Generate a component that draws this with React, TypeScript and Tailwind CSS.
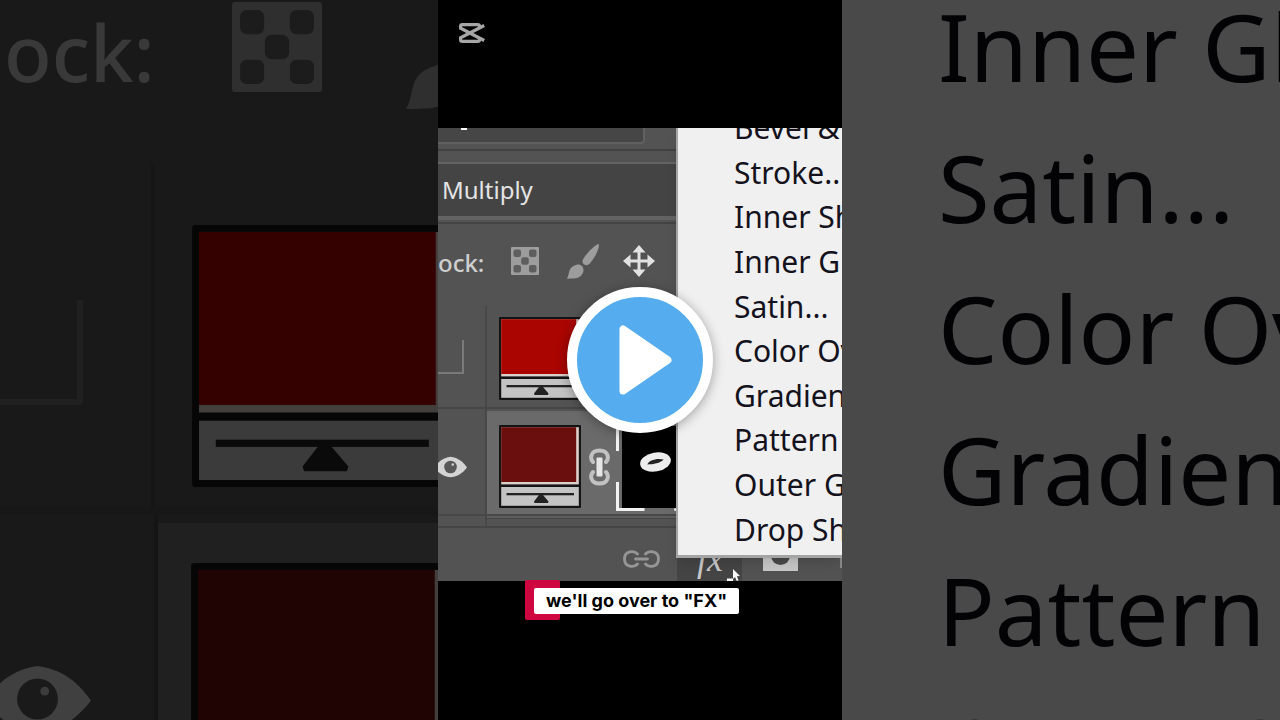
import React from 'react';

interface IconProps {
  className?: string;
}

interface SwatchProps extends IconProps {
  color: string;
}

const EFFECTS = [
  'Bevel & Emboss...',
  'Stroke...',
  'Inner Shadow...',
  'Inner Glow...',
  'Satin...',
  'Color Overlay...',
  'Gradient Overlay...',
  'Pattern Overlay...',
  'Outer Glow...',
  'Drop Shadow...',
];

const CheckerIcon: React.FC<IconProps> = ({ className }) => (
  <svg className={className} viewBox="0 0 28 28" fill="none">
    <rect width="28" height="28" rx="1" fill="#9d9d9d" />
    <g fill="#5e5e5e">
      <rect x="2.5" y="2.5" width="7.5" height="7.5" rx="2" />
      <rect x="18" y="2.5" width="7.5" height="7.5" rx="2" />
      <rect x="10.2" y="10.2" width="7.6" height="7.6" rx="2.2" />
      <rect x="2.5" y="18" width="7.5" height="7.5" rx="2" />
      <rect x="18" y="18" width="7.5" height="7.5" rx="2" />
    </g>
  </svg>
);

const BrushIcon: React.FC<IconProps> = ({ className }) => (
  <svg className={className} viewBox="0 0 32 35" fill="#9d9d9d">
    <path d="M31 0c1 0 1 1 .8 3-1.500 6-5 12-9 16.500-2 2-4 2-5.500 1-1.800-1.200-2.300-3-1.300-5C19 10 26 2.500 31 0Z" />
    <path d="M9 21c4-1.500 7.500 1 7.500 5 0 5-5 8.500-10 8.500-3 0-5 .5-6.500 0 1.500-2.500 1.500-5 2.500-8 1-3 3.500-4.500 6.500-5.500Z" />
  </svg>
);

const MoveIcon: React.FC<IconProps> = ({ className }) => (
  <svg className={className} viewBox="0 0 32 32" fill="#e2e2e2">
    <path d="M16 0l6.500 7.500H17.500v7H24.500V9.500L32 16l-7.500 6.500V17.500h-7v7h5L16 32l-6.500-7.500h5v-7h-7v5L0 16l7.500-6.500v5h7v-7h-5Z" />
  </svg>
);

const EyeIcon: React.FC<IconProps> = ({ className }) => (
  <svg className={className} viewBox="0 0 34 22">
    <path d="M0 11.500C5 5 10 1.500 17 .5c7 1 12 4 17 11C29 18 23 21.500 17 21.500S5 18 0 11.500Z" fill="#d4d4d4" />
    <circle cx="17" cy="11" r="6.500" fill="#585858" />
    <circle cx="19.300" cy="8.500" r="1.400" fill="#c8c8c8" />
  </svg>
);

const Swatch: React.FC<SwatchProps> = ({ color, className }) => (
  <svg className={className} viewBox="0 0 82 83">
    <rect width="82" height="83" rx="1" fill="#141414" />
    <rect x="2.200" y="2.200" width="77.600" height="57.200" fill="#dccfca" />
    <rect x="2.200" y="2.200" width="75" height="54.800" fill={color} />
    <rect x="2.200" y="62" width="77.600" height="18.800" fill="#c4c4c4" />
    <rect x="7.500" y="68" width="67.500" height="2.300" fill="#222" />
    <path d="M40 70h4l5.500 6.500-.5 1.500H35.500l-.5-1.500Z" fill="#222" />
  </svg>
);

const ChainIcon: React.FC<IconProps> = ({ className }) => (
  <svg className={className} viewBox="0 0 21 38" fill="none">
    <g stroke="#c2c2c2" strokeWidth="4" strokeLinecap="round">
      <path d="M4 14C1 11 1 2.500 10.500 2.500S20 11 17 14" />
      <path d="M4 24c-3 3-3 11.500 6.500 11.500S20 27 17 24" />
    </g>
    <rect x="7.500" y="9.500" width="6" height="19" rx="1" fill="#e6e6e6" />
  </svg>
);

const LinkIcon: React.FC<IconProps> = ({ className }) => (
  <svg className={className} viewBox="0 0 37 18" fill="none" stroke="#969696" strokeWidth="2.800" strokeLinecap="round">
    <path d="M14.500 4C11.500.5 1.500.3 1.500 9s10 8.500 13 5" />
    <path d="M22.500 4c3-3.500 13-3.700 13 5s-10 8.500-13 5" />
    <path d="M12.500 9h12" />
  </svg>
);

const MaskThumb: React.FC<IconProps> = ({ className }) => (
  <svg className={className} viewBox="0 0 61 90">
    <rect x="6" y="4" width="55" height="82" fill="#000" />
    <path d="M1.500 3v26M1.500 60v27.500h27" stroke="#f2f2f2" strokeWidth="3" fill="none" />
    <circle cx="59.500" cy="87.500" r="1.500" fill="#f2f2f2" />
    <g transform="rotate(-10 39.500 40)">
      <ellipse cx="39.500" cy="40" rx="15.500" ry="9.500" fill="#ededed" />
      <path d="M31 41c2-4 11-5 17-2-4 3-11 3-17 2Z" fill="#222" />
    </g>
  </svg>
);

const CapLogo: React.FC<IconProps> = ({ className }) => (
  <svg className={className} viewBox="0 0 26 20" fill="none" stroke="#a6a6a6" strokeWidth="3.200">
    <path d="M20.500 5V3q0-1.400-2-1.400H3.500Q1.600 1.600 1.600 3v2.200L25.200 17.500" />
    <path d="M20.500 15v2q0 1.400-2 1.400H3.500q-1.900 0-1.900-1.400v-2.200L25.200 2.500" />
  </svg>
);

const CursorIcon: React.FC<IconProps> = ({ className }) => (
  <svg className={className} viewBox="0 0 13 12">
    <path d="M0 9.500h6V12H0Z" fill="#fff" />
    <path d="M6 0l7 7-3.200.3 1.700 4-1.700.7-1.800-4L6 10Z" fill="#fff" />
  </svg>
);

// Blown-up left part of the frame, behind the video
const LeftBackdrop = () => (
  <div className="flex-1 min-w-0 overflow-hidden" aria-hidden="true">
    <div className="h-full flex flex-col bg-[#535353] opacity-30">
      <div className="h-[165px] shrink-0 flex items-start overflow-hidden">
        <span className="w-[232px] shrink-0 pl-1 text-[78px] leading-[104px] font-medium text-[#bdbdbd]">ock:</span>
        <CheckerIcon className="w-[90px] h-[90px] mt-0.5 shrink-0" />
        <BrushIcon className="w-[101px] h-[110px] ml-[84px] shrink-0" />
      </div>
      <div className="h-[350px] shrink-0 flex border-b-8 border-[#4c4c4c]">
        <div className="w-[155px] shrink-0 pt-[135px] border-r-4 border-[#484848]">
          <div className="w-[83px] h-[105px] border-r-[6px] border-b-[6px] border-[#6a6a6a] rounded-br" />
        </div>
        <Swatch color="#ab0500" className="w-[259px] h-[262px] ml-[37px] mt-[60px] shrink-0" />
      </div>
      <div className="flex-1 min-h-0 flex overflow-hidden">
        <div className="w-[158px] shrink-0 border-r-4 border-[#484848]">
          <EyeIcon className="w-[107px] h-[70px] -ml-4 mt-[149px]" />
        </div>
        <div className="flex-1 mt-2 bg-[#6a6a6a]">
          <Swatch color="#6a0f0d" className="w-[259px] h-[262px] ml-[33px] mt-10 max-w-none" />
        </div>
      </div>
    </div>
  </div>
);

const RightBackdrop = () => (
  <div className="flex-1 min-w-0 overflow-hidden" aria-hidden="true">
    <ul className="h-full overflow-hidden bg-[#f0f0f0] opacity-30 pl-24 text-[94px] text-[#0a0810] whitespace-nowrap">
      {EFFECTS.slice(3, 9).map((name) => (
        <li key={name} className="leading-[141px] first:-mt-6">
          {name}
        </li>
      ))}
    </ul>
  </div>
);

const EffectsMenu = () => (
  <div className="absolute right-0 top-0 w-[166px] h-[430px] flex flex-col justify-end overflow-hidden bg-[#f0f0f0] border-l-2 border-b-[3px] border-[#a4a4a4] shadow-lg">
    <ul className="h-[446px] shrink-0 mb-[3px] grid grid-rows-10">
      {EFFECTS.map((name) => (
        <li key={name} className="flex items-center pl-14">
          <button className="text-[30px] leading-10 whitespace-nowrap text-[#14121c]">{name}</button>
        </li>
      ))}
    </ul>
  </div>
);

const LayersPanel = () => (
  <div className="relative h-[453px] shrink-0 flex flex-col overflow-hidden bg-[#535353]">
    <div className="h-[23px] border-b-2 border-[#414141]">
      <div className="w-[207px] h-4 pl-[23px] bg-[#464646] border-r-2 border-b-2 border-[#606060] rounded-br">
        <div className="w-1.5 h-0.5 bg-white" />
      </div>
    </div>
    <select
      aria-label="Blend mode"
      className="appearance-none mt-[11px] h-[58px] pl-1 bg-[#444444] border-t-2 border-b-4 border-[#636363] text-2xl text-[#e4e4e4]"
    >
      <option>Multiply</option>
    </select>
    <div className="h-1 border-b-2 border-[#444444]" />
    <div className="h-[74px] shrink-0 flex items-center">
      <span className="w-[73px] pt-1 text-2xl font-medium text-[#cfcfcf]">ock:</span>
      <button aria-label="Lock transparent pixels"><CheckerIcon className="w-7 h-7" /></button>
      <button aria-label="Lock image pixels" className="ml-7"><BrushIcon className="w-8 h-[35px]" /></button>
      <button aria-label="Lock position" className="ml-6"><MoveIcon className="w-8 h-8" /></button>
    </div>
    <div className="h-[111px] shrink-0 flex border-b-2 border-[#464646]">
      <div className="w-[49px] mt-2 pt-[34px] border-r-2 border-[#484848]">
        <div className="w-[26px] h-[34px] border-r-2 border-b-2 border-[#7a7a7a]" />
      </div>
      <Swatch color="#ab0500" className="w-[82px] h-[83px] ml-3 mt-[19px]" />
    </div>
    <div className="h-[105px] shrink-0 flex">
      <div className="w-[49px] flex items-center border-r-2 border-[#484848]">
        <button aria-label="Toggle visibility" className="-ml-1 mt-2.5"><EyeIcon className="w-[33px] h-[22px] max-w-none" /></button>
      </div>
      <div className="flex-1 flex items-center gap-2 pl-3 pt-2 mt-0.5 bg-[#6a6a6a]">
        <Swatch color="#6a0f0d" className="w-[82px] h-[83px]" />
        <ChainIcon className="w-[21px] h-[38px]" />
        <MaskThumb className="w-[61px] h-[90px] -ml-0.5" />
      </div>
    </div>
    <div className="h-3 shrink-0 flex">
      <div className="w-[49px] border-r-2 border-t-2 border-[#484848]" />
      <div className="flex-1 border-t-2 border-[#484848]">
        <div className="h-[3px] border-b border-[#464646] bg-[#5f5f5f]" />
      </div>
    </div>
    <div className="flex-1 flex border-t-2 border-[#454545]">
      <button aria-label="Link layers" className="w-[239px] pl-[185px] pt-2 h-full flex items-center">
        <LinkIcon className="w-[37px] h-[18px]" />
      </button>
      <button className="relative w-[65px] h-full pl-5 pt-2 bg-[#454545] text-left">
        <span className="font-['Liberation_Serif',serif] italic text-4xl leading-10 text-[#c9c9c9]">fx</span>
        <CursorIcon className="absolute right-0.5 bottom-0 w-[13px] h-3" />
      </button>
      <button aria-label="Add mask" className="ml-[21px] mt-3 self-start">
        <svg className="w-[35px] h-[31px]" viewBox="0 0 35 31">
          <rect width="35" height="31" fill="#c9c9c9" />
          <circle cx="17.500" cy="15.500" r="9.500" fill="#4a4a4a" />
        </svg>
      </button>
      <div className="flex-1 flex justify-end pt-7">
        <div className="w-0.5 h-3 bg-[#8a8a8a]" />
      </div>
    </div>
    <EffectsMenu />
  </div>
);

const Caption = () => (
  <div className="relative ml-[87px] w-fit pl-[9px] pt-[7px]">
    <div className="absolute left-0 -top-px w-[35px] h-10 bg-[#cf0741] rounded-xs" />
    <p className="relative px-3 leading-[26px] bg-white rounded-xs text-lg font-bold text-black font-['Inter',sans-serif] whitespace-nowrap">
      we'll go over to "FX"
    </p>
  </div>
);

const PlayButton = () => (
  <button
    aria-label="Play"
    className="w-[146px] h-[146px] rounded-full border-[10px] border-white bg-[#55acee] shadow-[0_2px_12px_rgba(0,0,0,0.35)] flex items-center justify-center"
  >
    <svg className="w-[53px] h-[70px] ml-2.5" viewBox="0 0 53 70">
      <path d="M4 4v62L49 35Z" fill="#fff" stroke="#fff" strokeWidth="7" strokeLinejoin="round" />
    </svg>
  </button>
);

export default function App() {
  return (
    <main className="relative flex h-screen overflow-hidden bg-black font-['Noto_Sans',sans-serif]">
      <LeftBackdrop />
      <section className="h-full aspect-[101/180] shrink-0 flex flex-col overflow-hidden bg-black">
        <div className="h-32 shrink-0 pl-[21px] pt-[23px]">
          <CapLogo className="w-[26px] h-5" />
        </div>
        <LayersPanel />
        <Caption />
      </section>
      <RightBackdrop />
      <div className="absolute inset-0 flex items-center justify-center">
        <PlayButton />
      </div>
    </main>
  );
}
